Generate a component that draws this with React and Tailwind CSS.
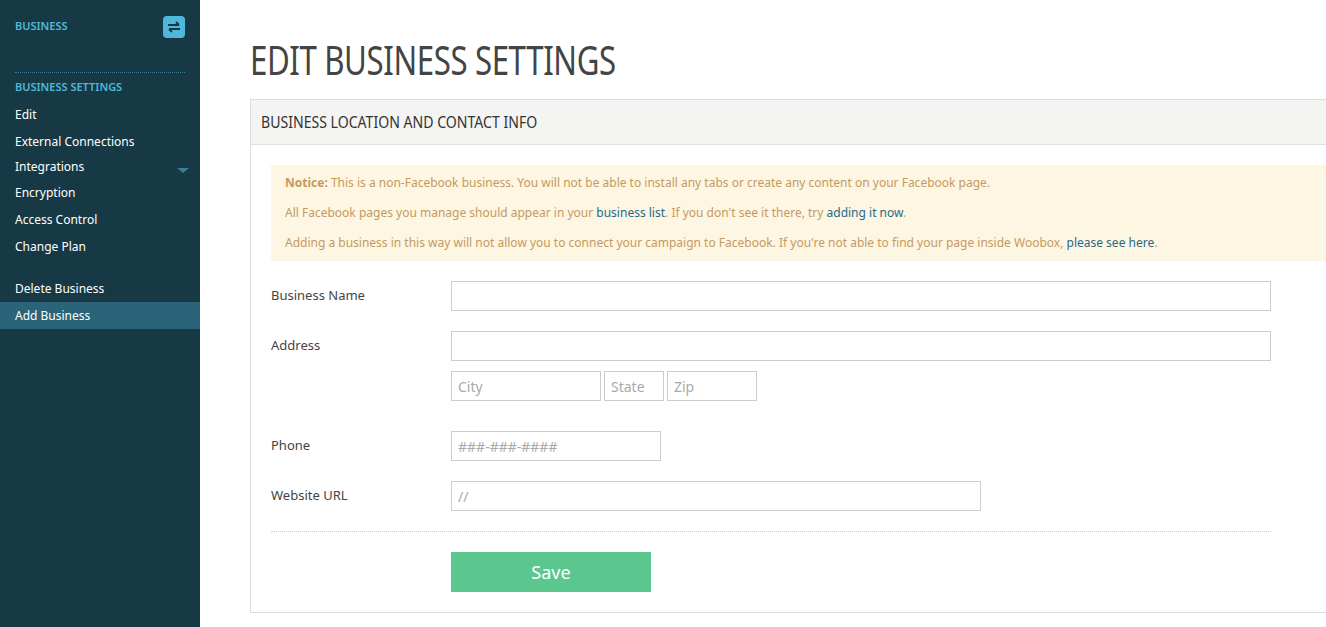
export default function App() {
  const nav = ["Edit", "External Connections"];
  return (
    <div className="flex h-[627px] w-[1326px] overflow-hidden bg-white font-['Open_Sans',sans-serif] text-[13px]">
      <aside className="w-[200px] shrink-0 bg-[#173845] text-[12px] text-white">
        <div className="flex h-[53px] items-center justify-between px-[15px]">
          <span className="text-[11px] font-semibold text-[#4fb8d9]">BUSINESS</span>
          <span className="flex h-[22px] w-[22px] items-center justify-center rounded-sm bg-[#4fb8d9]">
            <svg width="14" height="12" viewBox="0 0 14 12" fill="none" stroke="#173845" strokeWidth="1.8">
              <path d="M1 4h11M9 1l3 3" />
              <path d="M13 8H2M5 11L2 8" />
            </svg>
          </span>
        </div>
        <div className="mx-[15px] mt-[19px] border-t border-dotted border-[#3a7f96]" />
        <div className="px-[15px] pt-[6px] text-[11px] font-semibold leading-[16px] text-[#4fb8d9]">BUSINESS SETTINGS</div>
        <div className="mt-[6px]">
          {nav.map((n) => (
            <div key={n} className="h-[27px] px-[15px] leading-[27px]">{n}</div>
          ))}
          <div className="flex h-[24px] items-center justify-between pl-[15px] pr-[11px]">
            <span>Integrations</span>
            <span className="mt-[6px] h-0 w-0 border-x-[6px] border-t-[5px] border-x-transparent border-t-[#3a7f96]" />
          </div>
          {["Encryption", "Access Control", "Change Plan"].map((n) => (
            <div key={n} className="h-[27px] px-[15px] leading-[27px]">{n}</div>
          ))}
          <div className="mt-[15px] h-[27px] px-[15px] leading-[27px]">Delete Business</div>
          <div className="h-[27px] bg-[#2b6378] px-[15px] leading-[27px]">Add Business</div>
        </div>
      </aside>
      <main className="flex-1 pl-[50px] pt-[34px]">
        <h1 className="origin-left font-['DejaVu_Sans_Condensed',sans-serif] text-[40px] leading-[52px] tracking-[-0.5px] text-[#444] [transform:scaleX(0.78)]">EDIT BUSINESS SETTINGS</h1>
        <div className="mt-[13px] border border-r-0 border-[#dcdcdc]">
          <div className="flex h-[45px] items-center border-b border-[#e0e0e0] bg-[#f4f4f2] px-[10px]">
            <span className="origin-left font-['DejaVu_Sans_Condensed',sans-serif] text-[16px] text-[#333] [transform:scaleX(0.88)]">BUSINESS LOCATION AND CONTACT INFO</span>
          </div>
          <div className="pb-[20px] pl-[20px] pt-[20px]">
            <div className="bg-[#fdf6e3] px-[14px] py-[3px] text-[12px] leading-[30px] text-[#c59a60]">
              <p><b>Notice:</b> This is a non-Facebook business. You will not be able to install any tabs or create any content on your Facebook page.</p>
              <p>All Facebook pages you manage should appear in your <span className="text-[#286a86]">business list</span>. If you don't see it there, try <span className="text-[#286a86]">adding it now</span>.</p>
              <p>Adding a business in this way will not allow you to connect your campaign to Facebook. If you're not able to find your page inside Woobox, <span className="text-[#286a86]">please see here</span>.</p>
            </div>
            <div className="w-[1000px] text-[#444]">
              <Row label="Business Name" className="mt-[20px]"><input className="h-[30px] w-[820px] border border-[#ccc]" /></Row>
              <Row label="Address" className="mt-[20px]"><input className="h-[30px] w-[820px] border border-[#ccc]" /></Row>
              <div className="ml-[180px] mt-[10px] flex gap-[3px]">
                <Inp w="w-[150px]" p="City" />
                <Inp w="w-[60px]" p="State" />
                <Inp w="w-[90px]" p="Zip" />
              </div>
              <Row label="Phone" className="mt-[30px]"><Inp w="w-[210px]" p="###-###-####" /></Row>
              <Row label="Website URL" className="mt-[20px]"><Inp w="w-[530px]" p="//" /></Row>
              <div className="mt-[20px] border-t border-dotted border-[#ccc]" />
              <button className="ml-[180px] mt-[20px] h-[40px] w-[200px] bg-[#5bc78f] text-[18px] text-white">Save</button>
            </div>
          </div>
        </div>
      </main>
    </div>
  );
}

function Row({ label, className, children }) {
  return (
    <div className={`flex items-center ${className}`}>
      <div className="w-[180px]">{label}</div>
      {children}
    </div>
  );
}

function Inp({ w, p }) {
  return <input placeholder={p} className={`h-[30px] ${w} border border-[#ccc] px-[6px] text-[14px] placeholder:text-[#aaa]`} />;
}
